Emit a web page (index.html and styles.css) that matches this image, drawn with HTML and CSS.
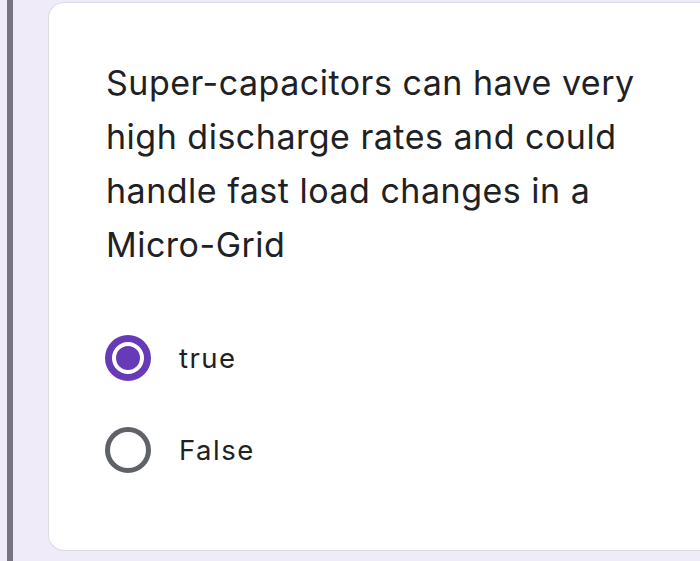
FILE: index.html
```html
<!DOCTYPE html>
<html>
<head>
<meta charset="utf-8">
<link rel="stylesheet" href="styles.css">
</head>
<body>
<div class="page">
  <div class="rail"><div class="bar"></div></div>
  <div class="card">
    <div class="question">Super-capacitors can have very high discharge rates and could handle fast load changes in a Micro-Grid</div>
    <div class="options">
      <div class="option">
        <span class="radio checked"><span class="dot"></span></span>
        <span class="label">true</span>
      </div>
      <div class="option">
        <span class="radio"></span>
        <span class="label">False</span>
      </div>
    </div>
  </div>
</div>
</body>
</html>
```
FILE: styles.css
```css
html, body {
  margin: 0;
  padding: 0;
  background: #f0ebf8;
  height: 561px;
  overflow: hidden;
}
.page {
  display: flex;
  height: 561px;
  font-family: Inter, Roboto, "Noto Sans", sans-serif;
  color: #202124;
}
.rail {
  width: 48px;
  flex: none;
  padding-left: 7px;
  box-sizing: border-box;
}
.bar {
  width: 6px;
  height: 100%;
  background: #78737f;
}
.card {
  flex: 1;
  margin-top: 2px;
  height: 549px;
  box-sizing: border-box;
  background: #ffffff;
  border: 1px solid #dadce0;
  border-right: none;
  border-radius: 16px 0 0 16px;
  padding: 53px 20px 0 57px;
}
.question {
  font-size: 34px;
  line-height: 54px;
  letter-spacing: 0.5px;
  max-width: 540px;
}
.options {
  margin-top: 40px;
  display: flex;
  flex-direction: column;
}
.option {
  height: 92px;
  display: flex;
  align-items: center;
  margin-left: -1px;
}
.radio {
  width: 46px;
  height: 46px;
  box-sizing: border-box;
  border-radius: 50%;
  border: 5px solid #5f6368;
  display: flex;
  align-items: center;
  justify-content: center;
  flex: none;
}
.radio.checked {
  border: 7px solid #673ab7;
}
.dot {
  width: 24px;
  height: 24px;
  border-radius: 50%;
  background: #673ab7;
}
.label {
  font-size: 27.5px;
  letter-spacing: 1.5px;
  margin-left: 28px;
}
```
